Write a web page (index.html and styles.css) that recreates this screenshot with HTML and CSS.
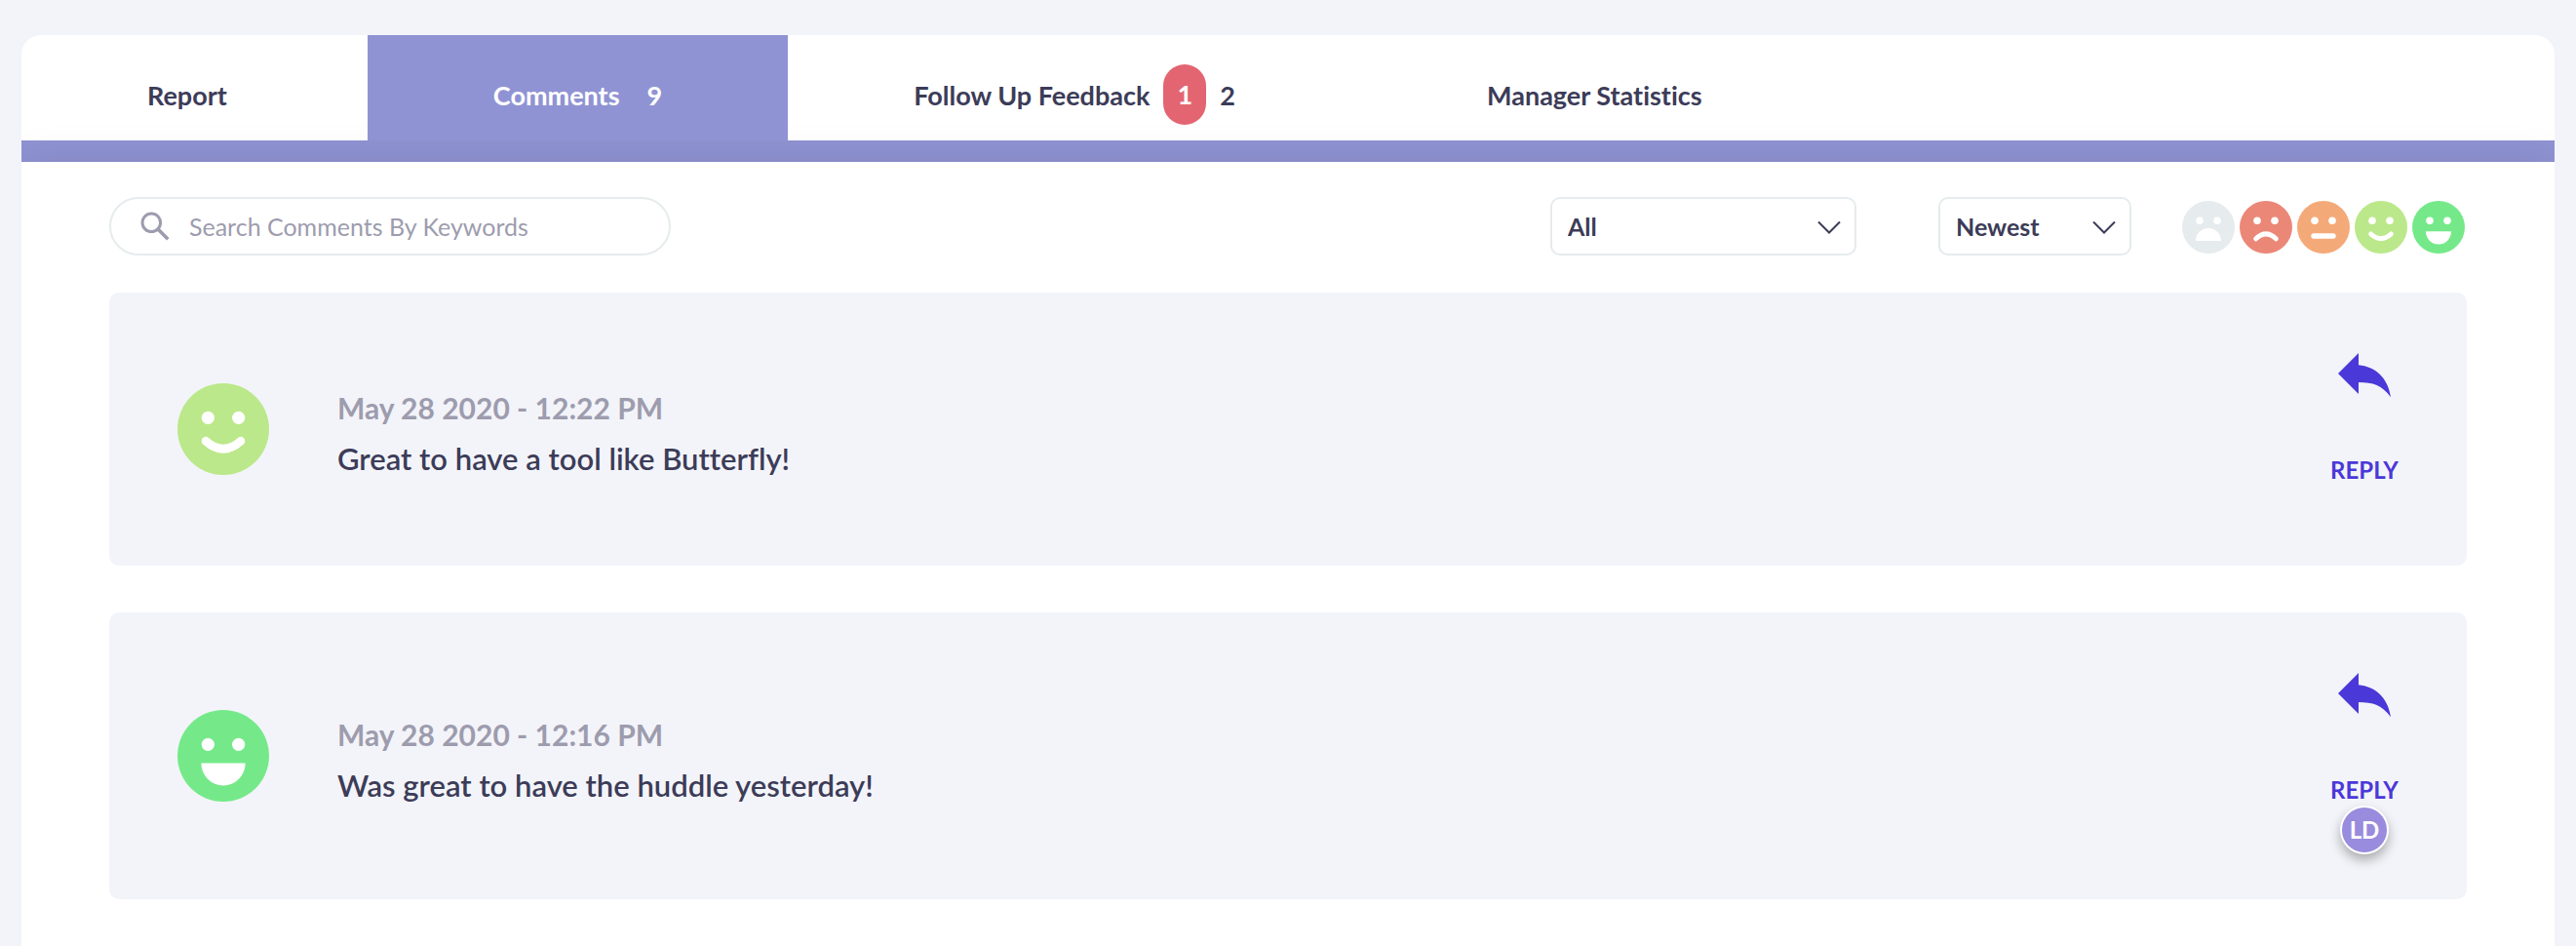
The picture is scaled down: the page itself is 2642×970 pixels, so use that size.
FILE: index.html
```html
<!DOCTYPE html>
<html lang="en">
<head>
  <meta charset="UTF-8" />
  <meta name="viewport" content="width=device-width, initial-scale=1.0"/>
  <title>Comments</title>
  <link rel="stylesheet" href="styles.css">
</head>
<body>
  <!-- Shared icons -->
  <svg class="sprite" aria-hidden="true">
    <symbol id="face-awful" viewBox="0 0 54 54">
      <circle cx="27" cy="27" r="27" fill="#e6ebed"/>
      <g fill="#fff"><circle cx="18" cy="20.3" r="3.8"/><circle cx="36" cy="20.3" r="3.8"/><path d="M14 41a13 13 0 0 1 26 0z"/></g>
    </symbol>
    <symbol id="face-sad" viewBox="0 0 54 54">
      <circle cx="27" cy="27" r="27" fill="#eb8777"/>
      <g fill="#fff"><circle cx="18" cy="20.3" r="3.8"/><circle cx="36" cy="20.3" r="3.8"/></g>
      <path d="M16.7 38.8Q27 28.8 37.3 38.8" fill="none" stroke="#fff" stroke-width="5" stroke-linecap="round"/>
    </symbol>
    <symbol id="face-neutral" viewBox="0 0 54 54">
      <circle cx="27" cy="27" r="27" fill="#f4aa78"/>
      <g fill="#fff"><circle cx="18" cy="20.3" r="3.8"/><circle cx="36" cy="20.3" r="3.8"/></g>
      <path d="M17 36H37" fill="none" stroke="#fff" stroke-width="5.4" stroke-linecap="round"/>
    </symbol>
    <symbol id="face-good" viewBox="0 0 54 54">
      <circle cx="27" cy="27" r="27" fill="#bbe88a"/>
      <g fill="#fff"><circle cx="18" cy="20.3" r="3.8"/><circle cx="36" cy="20.3" r="3.8"/></g>
      <path d="M16.7 34Q27 43.2 37.3 34" fill="none" stroke="#fff" stroke-width="5" stroke-linecap="round"/>
    </symbol>
    <symbol id="face-great" viewBox="0 0 54 54">
      <circle cx="27" cy="27" r="27" fill="#75e989"/>
      <g fill="#fff"><circle cx="18" cy="20.3" r="3.8"/><circle cx="36" cy="20.3" r="3.8"/><path d="M14 31.3a13 13.2 0 0 0 26 0z"/></g>
    </symbol>
    <symbol id="reply" viewBox="0 0 54 46">
      <path d="M0 21L21 0V12.3C38 14 51 25 54 45.3C45 33 36 30 21 30V42z" fill="#4b38d8"/>
    </symbol>
    <symbol id="chevron" viewBox="0 0 24 14">
      <path d="M1 1.5L12 12.5L23 1.5" fill="none" stroke="#3c3c58" stroke-width="2"/>
    </symbol>
  </svg>

  <main class="panel">
    <nav class="tabs">
      <button class="tab tab-report" type="button">Report</button>
      <button class="tab active" type="button">Comments <span class="count">9</span></button>
      <button class="tab" type="button">Follow Up Feedback <span class="badge">1</span> <span>2</span></button>
      <button class="tab" type="button">Manager Statistics</button>
    </nav>

    <section class="content">
      <form class="filters">
        <label class="search">
          <svg class="search-icon" viewBox="0 0 30 30" aria-hidden="true">
            <circle cx="11.3" cy="11.3" r="9.3" fill="none" stroke="#9d9cae" stroke-width="3"/>
            <path d="M17.8 17.8L28.3 28.3" stroke="#9d9cae" stroke-width="3.6"/>
          </svg>
          <input type="text" placeholder="Search Comments By Keywords" aria-label="Search comments" />
        </label>

        <div class="select-box select-type">
          <select aria-label="Comment type">
            <option>All</option>
          </select>
          <svg class="chevron" aria-hidden="true"><use href="#chevron"/></svg>
        </div>

        <div class="select-box select-sort">
          <select aria-label="Sort order">
            <option>Newest</option>
            <option>Oldest</option>
          </select>
          <svg class="chevron" aria-hidden="true"><use href="#chevron"/></svg>
        </div>

        <div class="faces">
          <button type="button" aria-label="Awful"><svg><use href="#face-awful"/></svg></button>
          <button type="button" aria-label="Sad"><svg><use href="#face-sad"/></svg></button>
          <button type="button" aria-label="Neutral"><svg><use href="#face-neutral"/></svg></button>
          <button type="button" aria-label="Good"><svg><use href="#face-good"/></svg></button>
          <button type="button" aria-label="Great"><svg><use href="#face-great"/></svg></button>
        </div>
      </form>

      <article class="comment">
        <svg class="mood" aria-hidden="true"><use href="#face-good"/></svg>
        <div class="comment-body">
          <p class="date">May 28 2020 - 12:22 PM</p>
          <p class="text">Great to have a tool like Butterfly!</p>
        </div>
        <div class="actions">
          <button class="reply" type="button">
            <svg aria-hidden="true"><use href="#reply"/></svg>
            REPLY
          </button>
        </div>
      </article>

      <article class="comment">
        <svg class="mood" aria-hidden="true"><use href="#face-great"/></svg>
        <div class="comment-body">
          <p class="date">May 28 2020 - 12:16 PM</p>
          <p class="text">Was great to have the huddle yesterday!</p>
        </div>
        <div class="actions">
          <button class="reply" type="button">
            <svg aria-hidden="true"><use href="#reply"/></svg>
            REPLY
          </button>
          <span class="avatar">LD</span>
        </div>
      </article>
    </section>
  </main>
</body>
</html>
```

FILE: styles.css
```css
* {
  box-sizing: border-box;
}

body {
  margin: 0;
  padding: 36px 22px 0;
  background: #f3f4f9;
  color: #3c3c58;
  font-family: Lato, sans-serif;
  font-size: 24px;
  font-variant-ligatures: none;
}

button,
input,
select {
  font-family: inherit;
  font-variant-ligatures: inherit;
  color: inherit;
}

button {
  padding: 0;
  border: none;
  background: none;
  cursor: pointer;
}

.sprite {
  display: none;
}

.panel {
  min-height: calc(100vh - 36px);
  background: white;
  border-radius: 20px 20px 0 0;
  overflow: hidden;
}

/* Tabs */
.tabs {
  display: flex;
  height: 130px;
  border-bottom: 22px solid #9093d3;
}

.tab {
  display: flex;
  align-items: center;
  gap: 14px;
  padding: 14px 129px 0;
  font-size: 27px;
  font-weight: 700;
  white-space: nowrap;
}

.tab-report {
  padding-right: 144px;
}

.tab.active {
  background: #9093d3;
  color: white;
}

.count {
  margin-left: 14px;
}

.badge {
  width: 44px;
  line-height: 62px;
  border-radius: 22px;
  background: #e36572;
  color: white;
  text-align: center;
}

/* Filters */
.content {
  padding: 36px 90px 48px;
  box-shadow: 0 0 40px rgba(0,0,0,0.1);
}

.filters {
  display: flex;
  align-items: center;
  margin-bottom: 38px;
}

.search {
  display: flex;
  align-items: center;
  gap: 20px;
  width: 576px;
  height: 60px;
  padding: 0 30px;
  margin-right: auto;
  border: 2px solid #e6ebed;
  border-radius: 30px;
}

.search-icon {
  flex: none;
  width: 30px;
  height: 30px;
}

.search input {
  flex: 1;
  min-width: 0;
  padding: 0;
  border: none;
  outline: none;
  background: none;
  font-size: 25px;
}

.search input::placeholder {
  color: #9d9cae;
  opacity: 1;
}

.select-box {
  position: relative;
}

.select-type {
  width: 314px;
  margin-right: 84px;
}

.select-sort {
  width: 198px;
  margin-right: 52px;
}

.select-box select {
  appearance: none;
  display: block;
  width: 100%;
  height: 60px;
  padding: 0 16px;
  border: 2px solid #e6ebed;
  border-radius: 10px;
  background: white;
  font-size: 25px;
  font-weight: 700;
}

.chevron {
  position: absolute;
  top: 24px;
  right: 16px;
  width: 24px;
  height: 14px;
  pointer-events: none;
}

.faces {
  display: flex;
  gap: 5px;
  padding-top: 2px;
  margin-right: 2px;
}

.faces svg {
  display: block;
  width: 54px;
  height: 54px;
}

/* Comments */
.comment {
  display: flex;
  align-items: center;
  gap: 70px;
  min-height: 280px;
  padding: 0 70px;
  border-radius: 10px;
  background: #f3f4f9;
}

.comment + .comment {
  margin-top: 48px;
}

.mood {
  flex: none;
  width: 94px;
  height: 94px;
}

.comment-body {
  flex: 1;
  padding-top: 8px;
  font-size: 30px;
  line-height: 52px;
}

.date,
.text {
  margin: 0;
}

.date {
  color: #9d9cae;
  font-weight: 700;
}

.text {
  font-size: 31px;
  font-weight: 600;
}

.actions {
  display: flex;
  flex-direction: column;
  align-items: center;
  align-self: flex-start;
  width: 70px;
  padding: 62px 0 46px;
}

.reply {
  display: flex;
  flex-direction: column;
  align-items: center;
  gap: 59px;
  color: #4b38d8;
  font-size: 24px;
  font-weight: 700;
  line-height: 30px;
}

.reply svg {
  width: 54px;
  height: 46px;
}

.avatar {
  width: 50px;
  margin-top: 1px;
  border: 2px solid white;
  border-radius: 25px;
  background: #998bdd;
  box-shadow: 0 6px 12px rgba(0,0,0,0.3);
  color: white;
  font-weight: 700;
  line-height: 46px;
  text-align: center;
}
```
